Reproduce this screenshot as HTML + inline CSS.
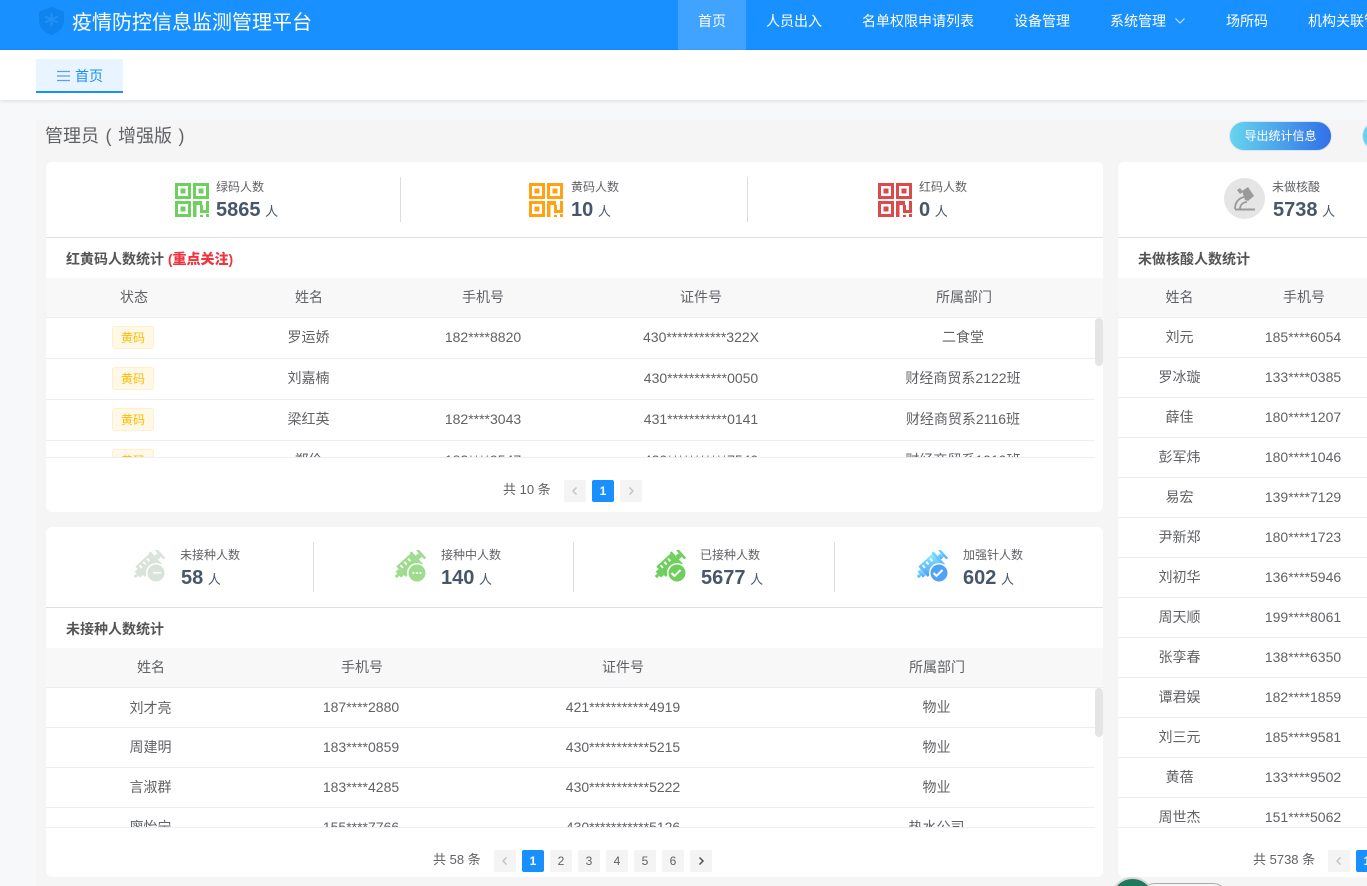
<!DOCTYPE html>
<html lang="zh-CN">
<head>
<meta charset="utf-8">
<title>疫情防控信息监测管理平台</title>
<style>
*{box-sizing:border-box;margin:0;padding:0}
html,body{width:1367px;height:886px;overflow:hidden;background:#f7f8fa;font-family:"Liberation Sans","Noto Sans CJK SC",sans-serif;color:#606266;font-size:14px}
.abs,.abs *{position:absolute}
#root{position:absolute;left:0;top:0;width:1367px;height:886px;overflow:hidden}
.top{left:0;top:0;width:1367px;height:50px;background:#1890ff}
.nav{top:0;height:50px;line-height:42px;color:#fff;font-size:14px;white-space:nowrap}
.tags{left:0;top:50px;width:1367px;height:50px;background:#fff;box-shadow:0 1px 4px rgba(0,21,41,.12)}
.main{left:36px;top:120px;width:1331px;height:766px;background:#f5f5f5}
.card{background:#fff;border-radius:6px;overflow:hidden}
.lab{font-size:12px;color:#606266;white-space:nowrap;line-height:16px}
.num{font-size:20px;font-weight:bold;color:#475669;white-space:nowrap;line-height:24px;margin-top:1px}
.num small{position:static;font-size:13px;font-weight:normal;margin-left:-1px;color:#475669}
.vl{width:1px;background:#dcdcdc}
.hl{height:1px;background:#e0e0e0}
.sec{font-size:14px;font-weight:bold;color:#555;white-space:nowrap;line-height:20px}
.sec b{position:static;color:#f0343f;font-size:14px}
.thead{background:#f8f8f9;height:40px;border-bottom:1px solid #ebeef5}
.clip{overflow:hidden;border-bottom:1px solid #ebeef5}
.r{left:0;border-bottom:1px solid #ebeef5}
.c{width:240px;margin-left:-120px;text-align:center;top:0;line-height:39px;white-space:nowrap;font-size:14px;color:#606266}
.thead .c{font-size:14px;color:#606266}
.tag{left:66px;width:42px;height:23px;background:#fff8e6;border:1px solid #fff0cc;border-radius:3px;color:#ffba00;font-size:12px;text-align:center;line-height:23px}
.thumb{width:8px;background:#e5e5e5;border-radius:4px}
.pt{font-size:13px;color:#606266;white-space:nowrap;line-height:22px}
.pb{width:22px;height:22px;background:#f4f4f5;border-radius:2px;color:#606266;font-size:12px;font-weight:normal;text-align:center;line-height:22px}
.pb.on{background:#1890ff;color:#fff;font-weight:bold}
.pb svg{left:6px;top:6px}
.pb.dis svg{stroke:#c0c4cc}
.btn{height:30px;border-radius:15px;background:linear-gradient(90deg,#67d4ee,#3170e8);color:#fff;font-size:12px;text-align:center;line-height:28px;border:1px solid #dbe6f5}
</style>
</head>
<body>
<svg width="0" height="0" style="position:absolute">
<defs><linearGradient id="bl" x1="0" y1="1" x2="1" y2="0"><stop offset="0" stop-color="#4d9cf6"/><stop offset="1" stop-color="#86ecff"/></linearGradient></defs>
<symbol id="qr" viewBox="0 0 35 35">
<g fill="none" stroke="currentColor" stroke-width="3">
<rect x="1.5" y="1.5" width="13" height="13"/><rect x="19.5" y="1.5" width="13" height="13"/><rect x="1.5" y="19.5" width="13" height="13"/>
</g>
<g fill="currentColor">
<rect x="5.5" y="5.500" width="5" height="5"/><rect x="23.500" y="5.500" width="5" height="5"/><rect x="5.500" y="23.500" width="5" height="5"/>
<path d="M18 18h9v4h-5.500v12H18zM25 22h3v5h3v-9h3v12h-9zM31 31h3v3h-3zM25 32h3v2h-3z"/>
</g>
</symbol>
<symbol id="syr" viewBox="0 0 34 34">
<g transform="translate(14,16) rotate(-42)" fill="currentColor">
<rect x="-9" y="-7.500" width="19" height="14"/>
<rect x="10" y="-8.500" width="2.500" height="17"/>
<rect x="12.500" y="-2.500" width="4" height="5"/>
<rect x="16.500" y="-6" width="2.500" height="12"/>
<rect x="-13" y="-4" width="4" height="8"/>
<rect x="-16.500" y="-1.500" width="3.500" height="3"/>
<g fill="#fff"><rect x="-6" y="-5.500" width="2" height="3.500"/><rect x="-1" y="-5.500" width="2" height="3.500"/><rect x="4" y="-5.500" width="2" height="3.500"/></g>
</g>
<circle cx="23" cy="23" r="10" fill="#fff"/>
<circle cx="23" cy="23" r="8.500" fill="currentColor"/>
</symbol>
<symbol id="syrb" viewBox="0 0 34 34">
<g transform="translate(14,16) rotate(-42)" fill="url(#bl)">
<rect x="-9" y="-7.500" width="19" height="14"/>
<rect x="10" y="-8.500" width="2.500" height="17"/>
<rect x="12.500" y="-2.500" width="4" height="5"/>
<rect x="16.500" y="-6" width="2.500" height="12"/>
<rect x="-13" y="-4" width="4" height="8"/>
<rect x="-16.500" y="-1.500" width="3.500" height="3"/>
<g fill="#fff"><rect x="-6" y="-5.500" width="2" height="3.500"/><rect x="-1" y="-5.500" width="2" height="3.500"/><rect x="4" y="-5.500" width="2" height="3.500"/></g>
</g>
<circle cx="23" cy="23" r="10" fill="#fff"/>
<circle cx="23" cy="23" r="8.500" fill="#4fa2f8"/>
</symbol>
</svg>
<div id="root" class="abs">

<div class="top">
  <svg style="left:38px;top:6px" width="27" height="30" viewBox="0 0 27 30"><path d="M13.5 1L26 5.5V15c0 7-5.5 11.500-12.500 14C6.500 26.500 1 22 1 15V5.500z" fill="#0f84ee"/><g stroke="#2290f8" stroke-width="2" stroke-linecap="round"><path d="M13.500 8v11M8 11l11 5M19 11L8 16"/></g></svg>
  <div style="left:72px;top:9px;font-size:20px;line-height:28px;color:#fff;white-space:nowrap">疫情防控信息监测管理平台</div>
  <div style="left:678px;top:0;width:68px;height:50px;background:#40a3ff"></div>
  <div class="nav" style="left:698px">首页</div>
  <div class="nav" style="left:766px">人员出入</div>
  <div class="nav" style="left:862px">名单权限申请列表</div>
  <div class="nav" style="left:1014px">设备管理</div>
  <div class="nav" style="left:1110px">系统管理</div>
  <svg style="left:1174px;top:17px" width="12" height="8" viewBox="0 0 12 8" fill="none" stroke="#d5e9ff" stroke-width="1"><path d="M1.500 1.500L6 6l4.500-4.500"/></svg>
  <div class="nav" style="left:1226px">场所码</div>
  <div class="nav" style="left:1308px">机构关联管理</div>
</div>

<div class="main"></div>

<div class="tags">
  <div style="left:36px;top:9px;width:87px;height:34px;background:#e8f4ff;border-bottom:2px solid #1890ff"></div>
  <svg style="left:57px;top:20px" width="13" height="12" viewBox="0 0 13 12" stroke="#5a9cf8" stroke-width="1.200"><path d="M0 1.500h13M0 6h13M0 10.500h13"/></svg>
  <div style="left:75px;top:16px;font-size:14px;line-height:21px;color:#1890ff;white-space:nowrap">首页</div>
</div>

<div style="left:45px;top:123px;font-size:18px;line-height:26px;color:#606266;white-space:nowrap;word-spacing:1.500px">管理员 ( 增强版 )</div>
<div class="btn" style="left:1229px;top:121px;width:103px">导出统计信息</div>
<div class="btn" style="left:1362px;top:121px;width:103px"></div>

<!-- card 1 -->
<div class="card" style="left:46px;top:162px;width:1057px;height:350px">
  <svg style="left:129px;top:21px;color:#6fcf5f" width="35" height="35"><use href="#qr"/></svg>
  <div class="lab" style="left:170px;top:17px">绿码人数</div>
  <div class="num" style="left:170px;top:35px">5865 <small>人</small></div>
  <div class="vl" style="left:354px;top:15px;height:45px"></div>
  <svg style="left:483px;top:21px;color:#ffa314" width="35" height="35"><use href="#qr"/></svg>
  <div class="lab" style="left:525px;top:17px">黄码人数</div>
  <div class="num" style="left:525px;top:35px">10 <small>人</small></div>
  <div class="vl" style="left:701px;top:15px;height:45px"></div>
  <svg style="left:832px;top:21px;color:#dd4a4a" width="35" height="35"><use href="#qr"/></svg>
  <div class="lab" style="left:873px;top:17px">红码人数</div>
  <div class="num" style="left:873px;top:35px">0 <small>人</small></div>
  <div class="hl" style="left:0;top:75px;width:1057px"></div>
  <div class="sec" style="left:20px;top:87px">红黄码人数统计 <b>(重点关注)</b></div>
  <div class="thead" style="left:0;top:116px;width:1057px">
    <div class="c" style="left:88px">状态</div><div class="c" style="left:263px">姓名</div><div class="c" style="left:437px">手机号</div><div class="c" style="left:655px">证件号</div><div class="c" style="left:918px">所属部门</div>
  </div>
  <div class="clip" style="left:0;top:156px;width:1049px;height:140px">
    <div class="r" style="top:0;width:1049px;height:41px"><div class="tag" style="top:8px">黄码</div><div class="c" style="left:262.500px">罗运娇</div><div class="c" style="left:437px">182****8820</div><div class="c" style="left:655px">430***********322X</div><div class="c" style="left:917px">二食堂</div></div>
    <div class="r" style="top:41px;width:1049px;height:41px"><div class="tag" style="top:8px">黄码</div><div class="c" style="left:262.500px">刘嘉楠</div><div class="c" style="left:655px">430***********0050</div><div class="c" style="left:917px">财经商贸系2122班</div></div>
    <div class="r" style="top:82px;width:1049px;height:41px"><div class="tag" style="top:8px">黄码</div><div class="c" style="left:262.500px">梁红英</div><div class="c" style="left:437px">182****3043</div><div class="c" style="left:655px">431***********0141</div><div class="c" style="left:917px">财经商贸系2116班</div></div>
    <div class="r" style="top:123px;width:1049px;height:41px"><div class="tag" style="top:8px">黄码</div><div class="c" style="left:262.500px">郑伶</div><div class="c" style="left:437px">182****9547</div><div class="c" style="left:655px">430***********7540</div><div class="c" style="left:917px">财经商贸系1919班</div></div>
  </div>
  <div class="thumb" style="left:1049px;top:156px;height:48px"></div>
  <div class="pt" style="left:457px;top:317px">共 10 条</div>
  <div class="pb dis" style="left:518px;top:318px"><svg width="10" height="10" viewBox="0 0 10 10" fill="none" stroke-width="1.500"><path d="M6.500 1.500L3 5l3.500 3.500"/></svg></div>
  <div class="pb on" style="left:546px;top:318px">1</div>
  <div class="pb dis" style="left:574px;top:318px"><svg width="10" height="10" viewBox="0 0 10 10" fill="none" stroke-width="1.500"><path d="M3.500 1.500L7 5 3.500 8.500"/></svg></div>
</div>

<!-- card 2 -->
<div class="card" style="left:46px;top:527px;width:1057px;height:350px">
  <svg style="left:87px;top:23px;color:#d8e3da" width="34" height="34"><use href="#syr"/></svg>
  <svg style="left:105px;top:41px" width="12" height="10"><rect x="2" y="4" width="8" height="1.500" fill="#fff"/></svg>
  <div class="lab" style="left:134px;top:20px">未接种人数</div>
  <div class="num" style="left:135px;top:38px">58 <small>人</small></div>
  <div class="vl" style="left:267px;top:15px;height:50px"></div>
  <svg style="left:348px;top:23px;color:#9ddb8e" width="34" height="34"><use href="#syr"/></svg>
  <svg style="left:365px;top:41px" width="12" height="10"><g fill="#fff"><rect x="1.500" y="4" width="2" height="2"/><rect x="5" y="4" width="2" height="2"/><rect x="8.500" y="4" width="2" height="2"/></g></svg>
  <div class="lab" style="left:395px;top:20px">接种中人数</div>
  <div class="num" style="left:395px;top:38px">140 <small>人</small></div>
  <div class="vl" style="left:527px;top:15px;height:50px"></div>
  <svg style="left:608px;top:23px;color:#6dcf5c" width="34" height="34"><use href="#syr"/></svg>
  <svg style="left:623px;top:39px" width="14" height="14" fill="none" stroke="#fff" stroke-width="2"><path d="M2.500 7l3 3 6-6"/></svg>
  <div class="lab" style="left:654px;top:20px">已接种人数</div>
  <div class="num" style="left:655px;top:38px">5677 <small>人</small></div>
  <div class="vl" style="left:788px;top:15px;height:50px"></div>
  <svg style="left:870px;top:23px" width="34" height="34"><use href="#syrb"/></svg>
  <svg style="left:885px;top:39px" width="14" height="14" fill="none" stroke="#fff" stroke-width="2"><path d="M2.500 7l3 3 6-6"/></svg>
  <div class="lab" style="left:917px;top:20px">加强针人数</div>
  <div class="num" style="left:917px;top:38px">602 <small>人</small></div>
  <div class="hl" style="left:0;top:80px;width:1057px"></div>
  <div class="sec" style="left:20px;top:92px">未接种人数统计</div>
  <div class="thead" style="left:0;top:121px;width:1057px">
    <div class="c" style="left:105px">姓名</div><div class="c" style="left:316px">手机号</div><div class="c" style="left:577px">证件号</div><div class="c" style="left:891px">所属部门</div>
  </div>
  <div class="clip" style="left:0;top:161px;width:1049px;height:140px">
    <div class="r" style="top:0;width:1049px;height:40px"><div class="c" style="left:104.500px;top:1px">刘才亮</div><div class="c" style="left:315px">187****2880</div><div class="c" style="left:577px">421***********4919</div><div class="c" style="left:890.500px">物业</div></div>
    <div class="r" style="top:40px;width:1049px;height:40px"><div class="c" style="left:104.500px">周建明</div><div class="c" style="left:315px">183****0859</div><div class="c" style="left:577px">430***********5215</div><div class="c" style="left:890.500px">物业</div></div>
    <div class="r" style="top:80px;width:1049px;height:40px"><div class="c" style="left:104.500px">言淑群</div><div class="c" style="left:315px">183****4285</div><div class="c" style="left:577px">430***********5222</div><div class="c" style="left:890.500px">物业</div></div>
    <div class="r" style="top:120px;width:1049px;height:40px"><div class="c" style="left:104.500px">廖怡宁</div><div class="c" style="left:315px">155****7766</div><div class="c" style="left:577px">430***********5126</div><div class="c" style="left:890.500px">热水公司</div></div>
  </div>
  <div class="thumb" style="left:1049px;top:161px;height:49px"></div>
  <div class="pt" style="left:387px;top:322px">共 58 条</div>
  <div class="pb dis" style="left:448px;top:323px"><svg width="10" height="10" viewBox="0 0 10 10" fill="none" stroke-width="1.500"><path d="M6.500 1.500L3 5l3.500 3.500"/></svg></div>
  <div class="pb on" style="left:476px;top:323px">1</div>
  <div class="pb" style="left:504px;top:323px">2</div>
  <div class="pb" style="left:532px;top:323px">3</div>
  <div class="pb" style="left:560px;top:323px">4</div>
  <div class="pb" style="left:588px;top:323px">5</div>
  <div class="pb" style="left:616px;top:323px">6</div>
  <div class="pb" style="left:644px;top:323px"><svg width="10" height="10" viewBox="0 0 10 10" fill="none" stroke="#555" stroke-width="1.500"><path d="M3.500 1.500L7 5 3.500 8.500"/></svg></div>
</div>

<!-- card 3 -->
<div class="card" style="left:1118px;top:162px;width:300px;height:715px">
  <div style="left:106px;top:16px;width:41px;height:41px;border-radius:50%;background:#e5e5e5"></div>
  <svg style="left:112px;top:22px" width="29" height="29" viewBox="0 0 29 29"><g fill="#9a9a9a"><path d="M12 7l6-4 6 9-6 5-3-1z"/><path d="M7 6l3-2 3 4-3 2z"/><rect x="5" y="24.500" width="20" height="2"/></g><path d="M14 13c-5 1-9 5-9 12M17 18c-4 0-7 3-7 7" fill="none" stroke="#9a9a9a" stroke-width="1.800"/></svg>
  <div class="lab" style="left:154px;top:17px">未做核酸</div>
  <div class="num" style="left:155px;top:35px">5738 <small>人</small></div>
  <div class="hl" style="left:0;top:75px;width:300px"></div>
  <div class="sec" style="left:20px;top:87px">未做核酸人数统计</div>
  <div class="thead" style="left:0;top:116px;width:300px">
    <div class="c" style="left:61.500px">姓名</div><div class="c" style="left:186px">手机号</div>
  </div>
  <div class="clip" style="left:0;top:156px;width:300px;height:510px">
    <div class="r" style="top:0;width:300px;height:40px"><div class="c" style="left:61.500px">刘元</div><div class="c" style="left:185px">185****6054</div></div>
    <div class="r" style="top:40px;width:300px;height:40px"><div class="c" style="left:61.500px">罗冰璇</div><div class="c" style="left:185px">133****0385</div></div>
    <div class="r" style="top:80px;width:300px;height:40px"><div class="c" style="left:61.500px">薛佳</div><div class="c" style="left:185px">180****1207</div></div>
    <div class="r" style="top:120px;width:300px;height:40px"><div class="c" style="left:61.500px">彭军炜</div><div class="c" style="left:185px">180****1046</div></div>
    <div class="r" style="top:160px;width:300px;height:40px"><div class="c" style="left:61.500px">易宏</div><div class="c" style="left:185px">139****7129</div></div>
    <div class="r" style="top:200px;width:300px;height:40px"><div class="c" style="left:61.500px">尹新郑</div><div class="c" style="left:185px">180****1723</div></div>
    <div class="r" style="top:240px;width:300px;height:40px"><div class="c" style="left:61.500px">刘初华</div><div class="c" style="left:185px">136****5946</div></div>
    <div class="r" style="top:280px;width:300px;height:40px"><div class="c" style="left:61.500px">周天顺</div><div class="c" style="left:185px">199****8061</div></div>
    <div class="r" style="top:320px;width:300px;height:40px"><div class="c" style="left:61.500px">张孪春</div><div class="c" style="left:185px">138****6350</div></div>
    <div class="r" style="top:360px;width:300px;height:40px"><div class="c" style="left:61.500px">谭君娱</div><div class="c" style="left:185px">182****1859</div></div>
    <div class="r" style="top:400px;width:300px;height:40px"><div class="c" style="left:61.500px">刘三元</div><div class="c" style="left:185px">185****9581</div></div>
    <div class="r" style="top:440px;width:300px;height:40px"><div class="c" style="left:61.500px">黄蓓</div><div class="c" style="left:185px">133****9502</div></div>
    <div class="r" style="top:480px;width:300px;height:40px"><div class="c" style="left:61.500px">周世杰</div><div class="c" style="left:185px">151****5062</div></div>
  </div>
  <div class="pt" style="left:135px;top:687px">共 5738 条</div>
  <div class="pb dis" style="left:210px;top:688px"><svg width="10" height="10" viewBox="0 0 10 10" fill="none" stroke-width="1.500"><path d="M6.500 1.500L3 5l3.500 3.500"/></svg></div>
  <div class="pb on" style="left:238px;top:688px">1</div>
</div>

<!-- floating widget -->
<div style="left:1140px;top:883px;width:88px;height:30px;border:1px solid #aaa;border-radius:15px;background:#f5f5f5"></div>
<div style="left:1110px;top:877px;width:45px;height:45px;border-radius:50%;background:#1d7a5c;border:2px solid #d8d8d8"></div>

</div>
</body>
</html>
